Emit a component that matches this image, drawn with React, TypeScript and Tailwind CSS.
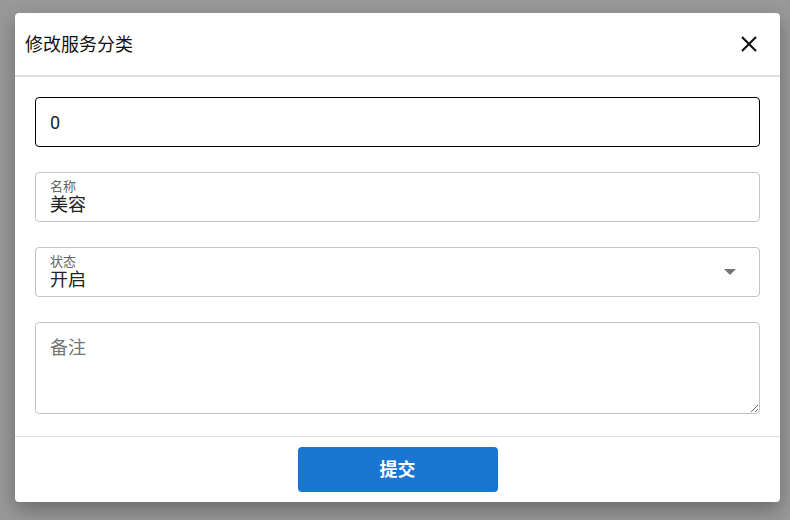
import React, { useState } from "react";

const FONT = "font-['Roboto','Noto_Sans_CJK_SC',sans-serif]";

/** Поле с плавающей меткой (label сверху, значение снизу) */
function LabeledField({ label, value, select }: { label: string; value: string; select?: boolean }) {
  return (
    <div className="relative h-[50px] rounded-[4px] border border-[#c4c4c4] px-[14px] pt-[7px] flex flex-col">
      <span className="text-[13px] leading-[14px] text-[#666]">{label}</span>
      <span className="text-[18px] leading-[21px] text-[#222]">{value}</span>
      {select && (
        <svg className="absolute right-[22px] top-[20px]" width="14" height="8" viewBox="0 0 14 8">
          <path d="M1 1h12L7 7z" fill="#757575" />
        </svg>
      )}
    </div>
  );
}

export default function App() {
  const [code, setCode] = useState("0");

  return (
    <div className={`${FONT} w-[790px] h-[520px] bg-[#999999] pt-[13px] pl-[15px]`}>
      <div className="w-[765px] h-[489px] bg-white rounded-[4px] shadow-[0_8px_20px_rgba(0,0,0,0.3)] flex flex-col">
        {/* шапка */}
        <div className="h-[64px] flex items-center justify-between pl-[10px] pr-[22px] border-b-2 border-[#e0e0e0]">
          <span className="text-[18px] text-[#111]">修改服务分类</span>
          <svg width="18" height="18" viewBox="0 0 18 18">
            <path d="M2 2l14 14M16 2L2 16" stroke="#111" strokeWidth="2.2" />
          </svg>
        </div>

        {/* форма */}
        <div className="flex-1 px-[20px] pt-[20px] flex flex-col gap-[25px] border-b border-[#e0e0e0]">
          <input
            value={code}
            onChange={(e) => setCode(e.target.value)}
            className="h-[50px] rounded-[4px] border border-black px-[14px] text-[18px] text-[#222] outline-none"
          />
          <LabeledField label="名称" value="美容" />
          <LabeledField label="状态" value="开启" select />
          <textarea
            placeholder="备注"
            className="h-[92px] rounded-[4px] border border-[#c4c4c4] px-[14px] pt-[14px] text-[18px] leading-[22px] placeholder:text-[#757575] outline-none"
          />
        </div>

        {/* подвал */}
        <div className="h-[65px] flex items-start justify-center pt-[10px]">
          <button className="w-[200px] h-[45px] rounded-[4px] bg-[#1976d2] text-white text-[18px] font-bold">
            提交
          </button>
        </div>
      </div>
    </div>
  );
}
